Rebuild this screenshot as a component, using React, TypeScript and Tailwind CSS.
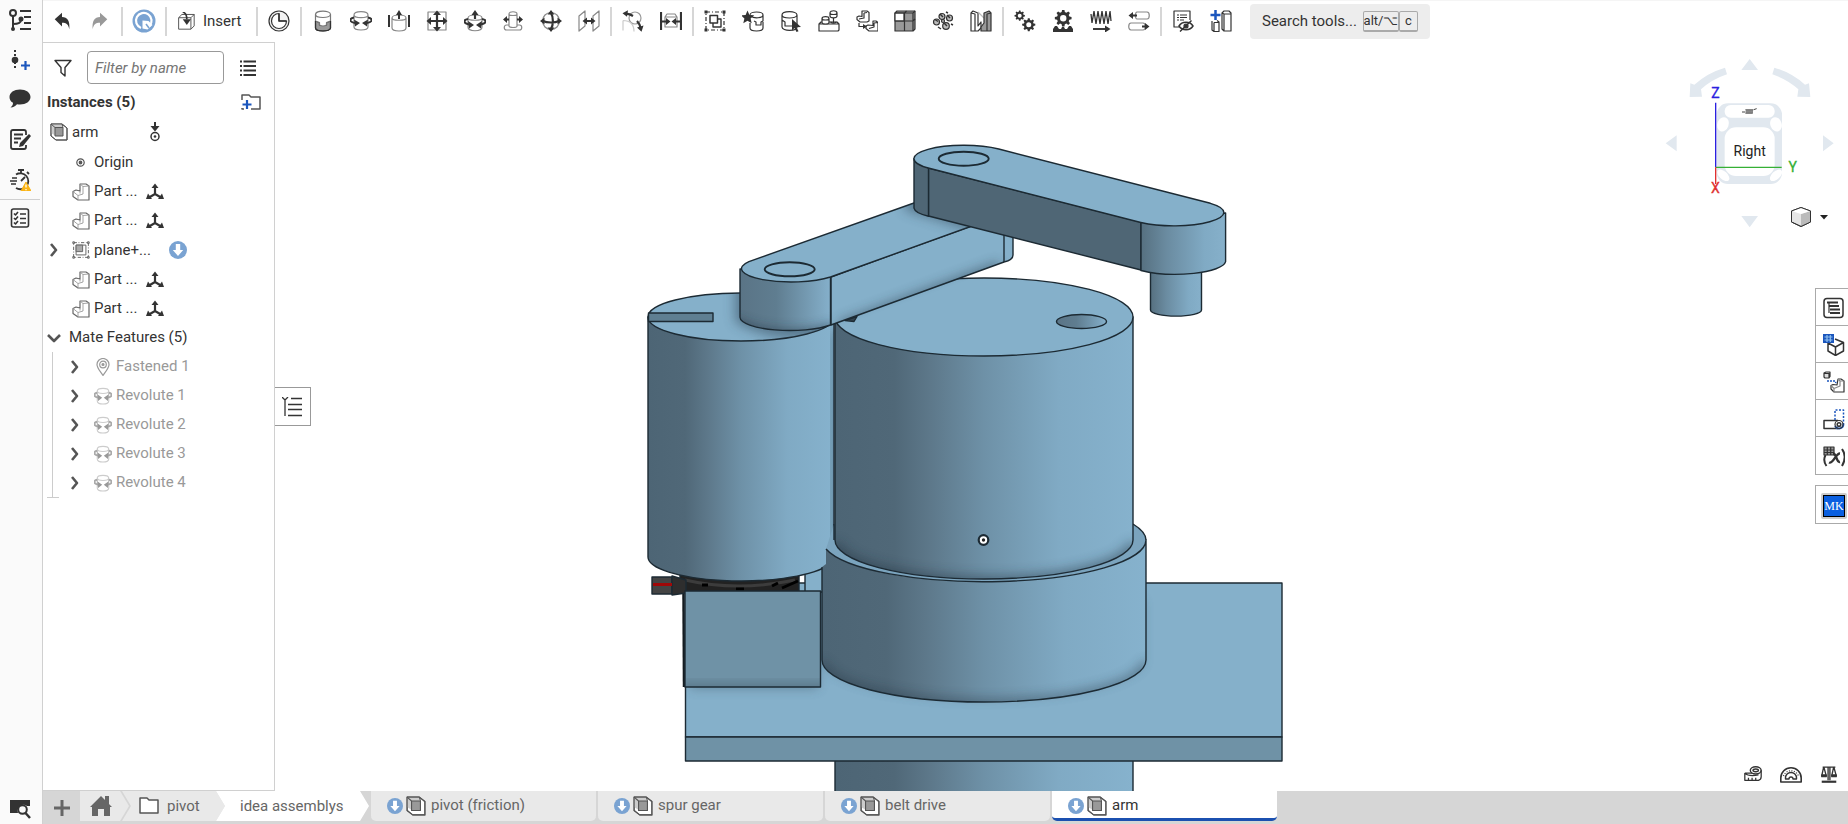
import type { ReactNode } from 'react'

const INK = '#333'

function Icon({ children, size = 22, box = 22, color = INK, w = 1.2 }: { children: ReactNode; size?: number; box?: number; color?: string; w?: number }) {
  return (
    <svg width={size} height={size} viewBox={`0 0 ${box} ${box}`} fill="none" stroke={color} strokeWidth={w} strokeLinejoin="round" className="shrink-0" aria-hidden="true">
      {children}
    </svg>
  )
}

const GEAR = 'M9.6 1h2.8l.5 2.6 1.9.8 2.2-1.5 2 2-1.5 2.2.8 1.9 2.6.5v2.8l-2.6.5-.8 1.9 1.5 2.2-2 2-2.2-1.5-1.9.8-.5 2.6H9.6l-.5-2.6-1.9-.8L5 18.900l-2-2 1.500-2.200-.8-1.900L1 12.300V9.500L3.700 9l.8-1.900L3 4.900l2-2 2.200 1.500 1.900-.8zM11 7.200a3.800 3.800 0 1 0 0 7.600 3.800 3.800 0 0 0 0-7.600z'

type Tool = { name: string; icon: ReactNode } | null

// null draws a divider
const TOOLS: Tool[] = [
  { name: 'Mate connector history', icon: (
    <>
      <circle cx="11" cy="11" r="10" fill="#f2f2f2" />
      <path d="M11 3.500a7.500 7.500 0 1 0 7.500 7.500H11z" fill="#fff" />
      <path d="M11 3.500V11h7.500" strokeWidth="1.500" />
    </>
  ) },
  null,
  { name: 'Fastened mate', icon: (
    <>
      <path d="M3.500 11v7c0 4 15 4 15 0v-7l-4 1.500V15h-7v-2.500z" fill="#999" />
      <path d="M3.500 4.500c0-4.500 15-4.500 15 0V11l-4 1.500V15q-3.500 2-7 0v-2.500l-4-1.500z" fill="#fff" stroke="#777" />
      <path d="M3.500 4.500c0 4 15 4 15 0" stroke="#777" /><path d="M3.500 11v7c0 4 15 4 15 0v-7" />
    </>
  ) },
  { name: 'Revolute mate', icon: (
    <>
      <path d="M4 5c0-4.500 14-4.500 14 0v12c0 4-14 4-14 0zM4 5c0 3.500 14 3.500 14 0" stroke="#888" />
      <path d="M4 7.500C-1 8.500-1 12 5 13M18 7.500c5 1 5 4.500-1 5.500" strokeWidth="2" />
      <path d="M4 9.500l6 3.500-5 3.500zM18 9.500L12 13l5 3.500z" fill={INK} stroke="none" />
    </>
  ) },
  { name: 'Slider mate', icon: (
    <>
      <path d="M4 8c0-4 14-4 14 0v10c0 4-14 4-14 0zM4 8c0 3 14 3 14 0" stroke="#888" />
      <path d="M1 5v12M21 5v12" strokeWidth="2" />
      <path d="M11 9V4" strokeWidth="2" /><path d="M8 5l3-5 3 5z" fill={INK} stroke="none" />
    </>
  ) },
  { name: 'Planar mate', icon: (
    <>
      <path d="M2 2h18v18H2z" stroke="#888" />
      <path d="M11 4v14M4 11h14" strokeWidth="2.200" />
      <path d="M7 5L11 .5 15 5zM7 17l4 4.500 4-4.500zM5 7L.5 11 5 15zM17 7l4.500 4-4.500 4z" fill={INK} stroke="none" />
    </>
  ) },
  { name: 'Cylindrical mate', icon: (
    <>
      <path d="M4 8c0-4 14-4 14 0v9c0 5-14 5-14 0zM4 8c0 3 14 3 14 0" stroke="#888" />
      <path d="M4 9C-1 10-1 13 5 14.500M18 9c5 1 5 4-1 5.500M11 9V4" strokeWidth="2.200" />
      <path d="M4 11l6 4-5 3.500zM18 11l-6 4 5 3.500zM7.500 5L11 0l3.500 5z" fill={INK} stroke="none" />
    </>
  ) },
  { name: 'Pin slot mate', icon: (
    <>
      <path d="M7 4c0-3 8-3 8 0v12c0 2-8 2-8 0zM7 4c0 2 8 2 8 0M7 15H4.500c-3 0-3 5 0 5h13c3 0 3-5 0-5H15" stroke="#888" />
      <path d="M7 9.500H4M15 9.500h3" strokeWidth="2" />
      <path d="M5 6L1 9.500 5 13zM17 6l4 3.500-4 3.500z" fill={INK} stroke="none" />
    </>
  ) },
  { name: 'Ball mate', icon: (
    <>
      <circle cx="11" cy="11" r="8.500" stroke="#888" />
      <path d="M11 3c2.500 4 2.500 12 0 16M3 11c4 2 12 2 16 0" strokeWidth="2.200" />
      <path d="M7.500 4.500L11 0l3.500 4.500zM7.500 17.500L11 22l3.500-4.500zM4.500 7.500L0 11l4.500 3.500zM17.500 7.500L22 11l-4.500 3.500z" fill={INK} stroke="none" />
    </>
  ) },
  { name: 'Parallel mate', icon: (
    <>
      <path d="M1 6l6-5v15l-6 5zM15 6l6-5v15l-6 5z" stroke="#888" />
      <path d="M7 11h8" strokeWidth="2" />
      <path d="M9 7.500L4.500 11 9 14.500zM13 7.500l4.500 3.500-4.500 3.500z" fill={INK} stroke="none" />
    </>
  ) },
  null,
  { name: 'Tangent mate', icon: (
    <>
      <circle cx="13" cy="8" r="6" stroke="#999" />
      <path d="M1 10.500c7 0 11 4 11 11M1 10.500v10" stroke="#ccc" />
      <path d="M11 6C8.500 4.500 6.500 4 4 3.700M15 11c2 2 3 4.500 3.500 7" strokeWidth="2.200" />
      <path d="M6 .3L.5 3.200l4.500 3.600zM15 17.500l4.500 4.300 2-6.300z" fill={INK} stroke="none" />
    </>
  ) },
  { name: 'Width mate', icon: (
    <>
      <path d="M1 2v18M21 2v18" strokeWidth="2.200" />
      <path d="M5 7l2-3h8l2 3v10H5zM5 7h12" stroke="#888" />
      <path d="M2 11.500h5M20 11.500h-5" strokeWidth="2" />
      <path d="M6 8l4.500 3.500L6 15zM16 8l-4.500 3.500L16 15z" fill={INK} stroke="none" />
    </>
  ) },
  null,
  { name: 'Group', icon: (
    <>
      <path d="M2 2h18v18H2z" strokeDasharray="4 2 1 2" />
      <path d="M.5.5h3v3h-3zM18.500.5h3v3h-3zM.5 18.500h3v3h-3zM18.500 18.500h3v3h-3z" fill={INK} stroke="none" />
      <path d="M9 9h8v8H9z" strokeWidth="1.400" /><path d="M6 5.500h7.500V13H6z" fill="#fff" strokeWidth="1.500" />
    </>
  ) },
  { name: 'Favorite part', icon: (
    <>
      <path d="M8 5c0-4 13-4 13 0v6l-2 1v3h-5v-3l-2-1M8 13v5c0 4 13 4 13 0v-6M9 6c3 3 12 2 12-1" />
      <path d="M5.500.5l1.900 4.400 4.800.4-3.600 3.200 1.100 4.700-4.200-2.500-4.200 2.500 1.100-4.700-3.400-3.200 4.600-.4z" fill={INK} stroke="none" />
    </>
  ) },
  { name: 'Select part', icon: (
    <>
      <path d="M2 5c0-4.500 15-4.500 15 0v12c0 4.500-15 4.500-15 0zM2 5c0 4 15 4 15 0M2 10l3 2v4h7" />
      <path d="M12 9l9 8-4.500.3 2 4-2 .7-2-4-2.500 2.500z" fill={INK} stroke="none" />
    </>
  ) },
  { name: 'Snap parts', icon: (
    <>
      <path d="M1 14l2-2h16l2 2v6l-1 1H1zM1 14h20" />
      <path d="M4 8.500c0-2.500 7-2.500 7 0v4c0 2-7 2-7 0zM12 3c0-3 7-3 7 0v3c0 2.500-7 2.500-7 0zM4 8.500c0 2 7 2 7 0M12 3c0 2 7 2 7 0" fill="#fff" />
      <path d="M15.500 8v5M12.500 12c2 1.500 4 1.500 6 0" />
    </>
  ) },
  { name: 'Move part', icon: (
    <>
      <path d="M6 1h5l2 1.500V11l-2 1H4L1 9.500V7l2-1 3 .5zM8 3l3-.5M8 3v5l-5 1" />
      <path d="M17 11h3l2 1.500V21h-9l-3-2.500V16l2-1 5 .5zM18 13v4l-5 1.500M18 13l4-.5" />
      <path d="M3 13v3.500h5" /><path d="M7 14l4 2.500L7 19z" fill={INK} stroke="none" />
    </>
  ) },
  { name: 'Linear pattern', icon: (
    <>
      <path d="M1 3l2-2h18v18l-2 2H1z" fill="#999" />
      <path d="M1 3h9v8H1z" fill="#fff" />
      <path d="M1 11h18l2-2M10.500 3v18M10.500 3l2-2M19 3v18M1 3h18l2-2" />
    </>
  ) },
  { name: 'Circular pattern', icon: (
    <>
      <g fill="#bbb">
        <circle cx="4.500" cy="12" r="3" /><circle cx="10" cy="6.500" r="3" /><circle cx="17.500" cy="8" r="3" /><circle cx="14" cy="16" r="3.300" /><circle cx="11" cy="11" r="1.500" />
      </g>
      <path d="M3 9.500l3 2M8 4l3 3M15 5l3 3M12 13l3 3M6 17l3 2M19 14l2 1M14 2l2 1" strokeWidth="1.500" />
    </>
  ) },
  { name: 'Mirror parts', icon: (
    <>
      <path d="M1 3l2-2 5 2v13l3-4v6l-3 3H1zM1 3l4 1v17" fill="#fff" />
      <path d="M8 2l6 6" stroke="#bbb" />
      <path d="M21 3l-2-2-5 2v10l-3 4v4h10zM21 3l-4 1v17" fill="#999" />
    </>
  ) },
  null,
  { name: 'Gear relation', icon: (
    <g fill={INK} stroke="none" fillRule="evenodd">
      <path d={GEAR} transform="scale(.52)" /><path d={GEAR} transform="translate(7.500 7.500) scale(.66)" />
    </g>
  ) },
  { name: 'Rack and pinion relation', icon: (
    <g fill={INK} stroke="none" fillRule="evenodd">
      <path d={GEAR} transform="translate(2 -1) scale(.84)" />
      <path d="M1 22v-3l2-3h2l2 3h2l1-2h2l1 2h2l2-3h2l2 3v3z" />
    </g>
  ) },
  { name: 'Screw relation', icon: (
    <>
      <path d="M1 4l1 9M4 1l2 13M8 1l2 13M12 1l2 13M16 1l2 13M20 1l1 10M2 13l2-12M6 14L8 1M10 14l2-13M14 14l2-13M18 14l2-13" strokeWidth="1.300" />
      <path d="M3 19h13" strokeWidth="1.900" /><path d="M15 15.500l5.500 3.500-5.500 3.500z" fill={INK} stroke="none" />
    </>
  ) },
  { name: 'Linear relation', icon: (
    <>
      <path d="M9 2h10c3 0 3 7 0 7H9c-2 0-2-7 0-7zM3 13h12c3 0 3 7 0 7H3c-3 0-3-7 0-7z" stroke="#888" />
      <path d="M9 5.500H4M14 16.500h5" strokeWidth="2" /><path d="M5 2L.5 5.500 5 9zM17 13l4.500 3.500L17 20z" fill={INK} stroke="none" />
    </>
  ) },
  null,
  { name: 'Hide named views', icon: (
    <>
      <path d="M7 17H2V1h16v9" /><path d="M5 5h10M5 7.500h10M5 10h7" strokeDasharray="2 1 20 0" />
      <path d="M7 16c3-5 11-5 14 0-3 5-11 5-14 0zM8 21.500L19.500 10.500" strokeWidth="1.500" /><circle cx="14" cy="16" r="2" fill={INK} />
    </>
  ) },
  { name: 'Add configured part', icon: (
    <>
      <path d="M2 11v9l2 1.500h5V12l-2-1.500M12 3l2-2h5l2 2v18h-7l-2-2zM14 4h7M14 4v17M12 3l2 1M4 12.500h5M4 12.500V21" />
      <path d="M5.500 0v10M.5 5h10" stroke="#1b56bd" strokeWidth="2.500" />
    </>
  ) },
]

const Divider = () => <span className="mx-[2px] h-[29px] w-[2px] shrink-0 bg-[#d6d6d6]" />

function Toolbar() {
  return (
    <header className="flex h-[42px] items-center border-t border-[#f5f5f5] bg-white pb-px">
      <button aria-label="Undo" className="flex w-[38px] justify-center">
        <Icon size={20}><path d="M3 9l8-7v4.500c6 0 9 4.500 8 13.500-1-5-3-7-8-7v4z" fill={INK} stroke="none" /></Icon>
      </button>
      <button aria-label="Redo" className="flex w-[38px] justify-center">
        <Icon size={20}><path d="M19 9l-8-7v4.500c-6 0-9 4.500-8 13.500 1-5 3-7 8-7v4z" fill="#999" stroke="none" /></Icon>
      </button>
      <Divider />
      <button aria-label="Update" className="flex w-[38px] justify-center">
        <Icon size={24} box={24}>
          <circle cx="12" cy="12" r="11.500" fill="#7aa3d2" stroke="none" />
          <path d="M9 19a7.800 7.800 0 1 1 8.500-2" stroke="#fff" strokeWidth="2.200" />
          <path d="M10.500 11.500l6 .5 4 4-5 4.500-5-1z" fill="#fff" stroke="none" />
          <path d="M14 15l3 4" stroke="#7aa3d2" strokeWidth="1.500" />
        </Icon>
      </button>
      <Divider />
      <button className="flex w-[85px] items-center gap-2 pl-2 text-[15px]">
        <Icon size={18}>
          <path d="M2 7l4-4h15v14l-4 4H2zM2 7h15v14M17 7l4-4" stroke="#555" />
          <path d="M7 0c4 1 5 4 5 9" strokeWidth="2" /><path d="M7 9h10l-5 7z" fill={INK} stroke="none" />
        </Icon>
        Insert
      </button>
      <Divider />
      {TOOLS.map((t, i) => t
        ? <button key={i} aria-label={t.name} className="flex w-[38px] shrink-0 justify-center"><Icon>{t.icon}</Icon></button>
        : <Divider key={i} />)}
      <button className="ml-[10px] flex h-[35px] w-[180px] shrink-0 items-center rounded-[4px] bg-[#ededed] pl-3 text-[15px]">
        <span className="w-[101px] text-left">Search tools...</span>
        <kbd className="flex h-[21px] w-[36px] items-center justify-center rounded-[2px] border border-b-2 border-[#aaa] font-[Roboto,sans-serif] text-[13px] whitespace-nowrap">alt/⌥</kbd>
        <kbd className="flex h-[21px] w-[19px] items-center justify-center rounded-[2px] border border-b-2 border-[#aaa] font-[Roboto,sans-serif] text-[13px]">c</kbd>
      </button>
    </header>
  )
}

function Rail() {
  const btn = 'flex h-[40px] w-full items-center justify-center'
  return (
    <nav className="flex w-[43px] shrink-0 flex-col border-r border-[#d0d0d0] bg-[#fafafa] pr-[2px]">
      <button aria-label="Instances" className={btn}>
        <Icon w={2}><circle cx="4" cy="4" r="3" /><path d="M4 7v14M4 15c5 0 8-1 8-4M11 2h11M15 8h7M15 14h7M11 20h11" /><circle cx="4" cy="20" r="1" /><circle cx="12" cy="10" r="1.500" fill={INK} /></Icon>
      </button>
      <button aria-label="Add version" className={btn}>
        <Icon><path d="M6 1v20" strokeWidth="2" strokeDasharray="2 2" /><circle cx="6" cy="11" r="3.300" fill={INK} stroke="none" /><path d="M16.500 12v9M12 16.500h9" stroke="#1b56bd" strokeWidth="2.200" /></Icon>
      </button>
      <button aria-label="Comments" className={btn}>
        <Icon><path d="M11 .5c6 0 10.500 3 10.500 7.500s-4.500 7.500-10.500 7.500c-1 0-2 0-3-.3-1.500 1.800-3.500 3-6.500 3.300 2-1.500 2.500-3 2.500-4.700C1.500 12.500.5 10.500.5 8 .5 3.500 5 .5 11 .5z" fill={INK} stroke="none" /></Icon>
      </button>
      <button aria-label="Notes" className={btn}>
        <Icon w={1.8}><path d="M17 6V3q0-2-2-2H4Q2 1 2 3v15q0 2 2 2h11q2 0 2-2v-2M5 5.500h9M5 9.500h7M5 13.500h4" /><path d="M20 5l2 2-8 10-4 1 1-4z" fill={INK} stroke="none" /></Icon>
      </button>
      <button aria-label="Performance" className={`${btn} border-b border-[#d0d0d0]`}>
        <Icon w={1.800}>
          <path d="M9 1h6M12 1v3M18 3l2 2M7 5.500A8 8 0 1 1 7 19M12 12l4-4" /><path d="M3 9h5M1 12h7M2 15h5" strokeWidth="1.300" />
          <path d="M17 13l5 9H12z" fill="#fbb414" stroke="#fbb414" strokeWidth="1" /><path d="M17 15.500v3M17 20v1.300" stroke="#fff" strokeWidth="1.300" />
        </Icon>
      </button>
      <button aria-label="Checklist" className="-mt-[2px] flex h-[40px] w-full items-center justify-center">
        <Icon size={20} box={20} w={1.6}><rect x="1.500" y="1" width="17" height="18" rx="2" /><path d="M4 5.500l1.500 1.500L8 4M4 10l1.500 1.500L8 8.500M4 14.500L5.500 16 8 13M10 6h6M10 10.500h6M10 15h6" /></Icon>
      </button>
      <button aria-label="Search document" className="mt-auto flex h-[32px] w-full items-center justify-center">
        <Icon><path d="M1 3h20v6h-3a6 6 0 0 0-9 7H1z" fill={INK} stroke="none" /><circle cx="13.500" cy="12.500" r="4.300" strokeWidth="2" fill="#fafafa" /><path d="M16.500 16l4.500 5" strokeWidth="2.500" /></Icon>
      </button>
    </nav>
  )
}

const Chevron = ({ open = false }: { open?: boolean }) => (
  <Icon size={14} box={14} color="#555" w={2.6}><path d={open ? 'M1 4l6 6 6-6' : 'M4 1l5 6-5 6'} /></Icon>
)

const AssemblyIcon = ({ size = 18 }: { size?: number }) => (
  <Icon size={size} box={18} color="#555" w={1}>
    <path d="M1 1h11l5 4v12H6l-5-4z" fill="#fff" /><path d="M1 1h11v10l-6 2-5-3z" fill="#ccc" stroke="none" />
    <path d="M5 4.500h8v8.500H5z" fill="#999" /><path d="M1 1l4 3.500M12 1l1 3.500" /><path d="M1 1h11l5 4v12H6l-5-4z" />
  </Icon>
)

const PartIcon = () => (
  <Icon size={18} box={18} color="#666">
    <path d="M8 1h6l3 2v14H6l-5-3.500V8.500L4 7l4 1z" />
    <path d="M8 1l3 2.500V11l-5 1.500V17M11 3.500l6-.5M1 8.500l5 4M8 8v2.500" strokeWidth=".9" stroke="#999" />
  </Icon>
)

const TriadIcon = () => (
  <Icon size={18} box={18}><path d="M9 3v8M9 11l-6 3.500M9 11l6 3.500" strokeWidth="2.200" /><path d="M5.500 5L9 .5 12.500 5zM0 16l2-5.500L6 16zM18 16l-2-5.500L12 16z" fill={INK} stroke="none" /></Icon>
)

const DownIcon = ({ size = 18 }: { size?: number }) => (
  <Icon size={size} box={18}><circle cx="9" cy="9" r="9" fill="#7aa3d2" stroke="none" /><path d="M6.800 3h4.400v6h3L9 15 3.800 9h3z" fill="#fff" stroke="none" /></Icon>
)

const RevoluteIcon = () => (
  <Icon size={18} box={22} color="#aaa" w={1.4}>
    <path d="M4 5c0-4.500 14-4.500 14 0v12c0 5-14 5-14 0zM4 5c0 4 14 4 14 0" stroke="#ccc" />
    <path d="M4 7C-1 8-1 12 5 13M18 7c5 1 5 5-1 6" strokeWidth="2.400" /><path d="M4 9l6 4-5 4zM18 9l-6 4 5 4z" fill="#999" stroke="none" />
  </Icon>
)

const PinIcon = () => (
  <Icon size={18} box={18} color="#999"><path d="M9 17.500C6 13 3 10 3 6.500a6 6 0 0 1 12 0c0 3.500-3 6.500-6 11z" /><circle cx="9" cy="6.500" r="3.300" /><circle cx="9" cy="6.500" r="1" fill="#999" /></Icon>
)

const PartRow = () => (
  <li className="flex h-[29px] items-center pl-[29px]">
    <PartIcon /><span className="ml-1 w-[52px]">Part ...</span><TriadIcon />
  </li>
)

const MATES = ['Fastened 1', 'Revolute 1', 'Revolute 2', 'Revolute 3', 'Revolute 4']

function InstancePanel() {
  return (
    <aside className="flex w-[232px] shrink-0 flex-col border-t border-r border-b border-[#d0d0d0] bg-white text-[15px]">
      <div className="flex items-center pt-2 pb-[3px]">
        <button aria-label="Filter" className="flex w-[44px] justify-center pr-1">
          <Icon size={18} box={18} w={1.4}><path d="M1 1.500h16l-6 7V17l-4-3.500v-5z" /></Icon>
        </button>
        <input aria-label="Filter by name" placeholder="Filter by name" className="h-[33px] w-[137px] rounded-[4px] border border-[#999] px-[7px] italic outline-none placeholder:text-[#757575]" />
        <button aria-label="List options" className="ml-4">
          <Icon size={16} box={16} w={2.2}><path d="M0 1.500h2M0 6h2M0 10.500h2M0 15h2M3.500 1.500H16M3.500 6H16M3.500 10.500H16M3.500 15H16" /></Icon>
        </button>
      </div>
      <div className="flex h-[30px] items-center justify-between pr-[13px] pl-1">
        <h2 className="font-bold">Instances (5)</h2>
        <button aria-label="New folder">
          <Icon size={20} box={20} color="#555"><path d="M1 8V3h7l2 2h9v12H10M1 16v1h2" strokeWidth="1.500" /><path d="M6 8v9M1.500 12.500h9" stroke="#1b56bd" strokeWidth="2.200" /></Icon>
        </button>
      </div>
      <ul>
        <li className="flex h-[30px] items-center pl-[7px]">
          <AssemblyIcon /><span className="ml-1 w-[73px]">arm</span>
          <Icon size={20} box={20}><path d="M10 0v5" strokeWidth="2" /><path d="M5.500 4h9L10 9.500z" fill={INK} stroke="none" /><circle cx="10" cy="14.500" r="4" strokeWidth="1.500" /><circle cx="10" cy="14.500" r="1.300" fill={INK} stroke="none" /></Icon>
        </li>
        <li className="flex h-[30px] items-center pl-[33px]">
          <Icon size={9} box={9} color="#555"><circle cx="4.500" cy="4.500" r="3.700" /><circle cx="4.500" cy="4.500" r="1.300" fill="#555" /></Icon>
          <span className="ml-[9px]">Origin</span>
        </li>
        <PartRow />
        <PartRow />
        <li className="flex h-[30px] items-center pl-1">
          <button aria-label="Expand plane" className="w-[25px]"><Chevron /></button>
          <Icon size={18} color="#666">
            <path d="M2 2h18v18H2z" strokeDasharray="4 2 1 2" /><path d="M1 1h2v2H1zM19 1h2v2h-2zM1 19h2v2H1zM19 19h2v2h-2z" />
            <path d="M5 5h12v12H5z" /><path d="M5 5h8v8H5z" fill="#aaa" />
          </Icon>
          <span className="ml-1 w-[75px]">plane+...</span>
          <DownIcon />
        </li>
        <PartRow />
        <PartRow />
      </ul>
      <button className="flex h-[29px] items-center gap-2 pl-1"><Chevron open />Mate Features (5)</button>
      <ul className="ml-[9px] border-l border-[#ccc] text-[#999]">
        {MATES.map(m => (
          <li key={m} className="flex h-[29px] items-center pl-[15px]">
            <button aria-label={`Expand ${m}`} className="w-[26px]"><Chevron /></button>
            {m.startsWith('Fastened') ? <PinIcon /> : <RevoluteIcon />}
            <span className="ml-1">{m}</span>
          </li>
        ))}
      </ul>
      <span className="ml-1 h-px w-3 bg-[#ccc]" />
    </aside>
  )
}

const LEFT_BODY = 'M648 317V557A93 24 0 0 0 826 566.700L834 561V317z'
const MAIN_BODY = 'M835 317V540A149 39 0 0 0 1133 540V317z'
const FLANGE = 'M822 567l4-3v-15A162 42 0 0 0 1146 540V660A162 42 0 0 1 822 660z'
const ARM_END = 'M740 269V317.300A50 13.400 0 0 0 830.500 325V277z'

function Model() {
  return (
    <svg viewBox="275 42 1573 749" preserveAspectRatio="xMidYMid slice" className="absolute inset-0 h-full w-full" stroke="#1c2a33" strokeWidth="1.400" strokeLinejoin="round" role="img" aria-label="Arm assembly">
      <defs>
        <linearGradient id="cyl">
          <stop offset="0" stopColor="#4d6575" /><stop offset=".2" stopColor="#506878" /><stop offset=".32" stopColor="#5d788a" />
          <stop offset=".5" stopColor="#6e91a7" /><stop offset=".75" stopColor="#80aac4" /><stop offset="1" stopColor="#86b2cd" />
        </linearGradient>
        <linearGradient id="round">
          <stop offset="0" stopColor="#5a7486" /><stop offset=".4" stopColor="#5f7d90" /><stop offset="1" stopColor="#85b0cb" />
        </linearGradient>
        <linearGradient id="tip">
          <stop offset="0" stopColor="#567080" /><stop offset=".3" stopColor="#6a8ba0" /><stop offset=".75" stopColor="#80aac4" /><stop offset="1" stopColor="#86b0ca" />
        </linearGradient>
        <filter id="soft" x="-20%" y="-60%" width="140%" height="220%"><feGaussianBlur stdDeviation="6" /></filter>
        <clipPath id="plateTop"><path d="M686 583h596v154H686z" /></clipPath>
        <clipPath id="housing"><path d="M686 592h134v95H686z" /></clipPath>
        <clipPath id="leftTop"><ellipse cx="741" cy="317" rx="93" ry="24" /></clipPath>
        <clipPath id="bigTop"><ellipse cx="984" cy="317" rx="149" ry="39" /></clipPath>
        <clipPath id="leftBody"><path d={LEFT_BODY} /></clipPath>
        <clipPath id="mainBody"><path d={MAIN_BODY} /></clipPath>
        <clipPath id="flangeBody"><path d={FLANGE} /></clipPath>
        <clipPath id="armEnd"><path d={ARM_END} /></clipPath>
        <clipPath id="armSide"><path d="M831 277l140-51 42 5v24q0 5-9 7L831 325z" /></clipPath>
        <clipPath id="armTop"><path d="M830.500 277A50 13.400 0 0 1 748.900 261.600L914 203l58 14v9z" /></clipPath>
      </defs>

      {/* base plate and column */}
      <path d="M835 755h298v50H835z" fill="url(#cyl)" />
      <path d="M685.500 583H1282v154H685.500z" fill="#85b0ca" />
      <path d="M685.500 737H1282v24H685.500z" fill="#6f92a6" />
      <g clipPath="url(#plateTop)" stroke="none" fill="#2d4353" opacity=".4" filter="url(#soft)">
        <path d="M826 600v64A160 40 0 0 0 1142 664V600z" /><path d="M690 650h128v38H690z" />
      </g>

      {/* motor and its housing */}
      <path d="M805 565h18v27h-18z" fill="#85b0ca" />
      <path d="M680 572h119v20H680z" fill="#222" />
      <path d="M685 580q52 12 110 0" fill="none" stroke="#3c3c3c" strokeWidth="3" />
      <path d="M702 585h6M736 589h8M772 586l6-3M782 588l16-7" stroke="#000" strokeWidth="3" />
      <path d="M652 577h20v17h-20z" fill="#444" /><path d="M672 576l14 4v13l-14 2z" fill="#2e2e2e" />
      <path d="M653 584.500h19" stroke="#a00808" strokeWidth="3" />
      <path d="M683.500 594l.5 93" strokeWidth="2.500" stroke="#151c21" />
      <path d="M685 591h135.500v96H685z" fill="#6f92a6" />
      <g clipPath="url(#housing)"><path d="M676 689h154" stroke="#22333f" strokeWidth="12" opacity=".6" filter="url(#soft)" /><path d="M676 684h154v10H676z" stroke="none" fill="#22333f" opacity=".35" filter="url(#soft)" /></g>

      {/* left cylinder */}
      <path d={LEFT_BODY} fill="url(#cyl)" />
      <g clipPath="url(#leftBody)"><path d="M836 330v240" stroke="#22333f" strokeWidth="8" opacity=".01" /><path d="M832 330h6v230h-6z" fill="#22333f" stroke="none" opacity=".5" filter="url(#soft)" /></g>
      <ellipse cx="741" cy="317" rx="93" ry="24" fill="#85b0ca" />
      <path d="M648.500 313H713v8.500h-64.500z" fill="#5f7f92" />
      <g clipPath="url(#leftTop)"><path d="M735 280h110v52q-60 18-110-10z" fill="#2d4353" opacity=".5" stroke="none" filter="url(#soft)" /></g>

      {/* flange and main cylinder */}
      <path d="M826 549l8-25h299q13 8 13 16A162 42 0 0 1 826 549z" fill="#7ba4be" stroke="none" />
      <path d="M1133 524q13 8 13 16M834 524v16" fill="none" />
      <path d={FLANGE} fill="url(#cyl)" stroke="none" />
      <path d="M826 549A162 42 0 0 0 1146 540V660A162 42 0 0 1 822 660V567" fill="none" />
      <g clipPath="url(#flangeBody)"><path d="M822 662A162 42 0 0 0 1146 662" fill="none" stroke="#22333f" strokeWidth="10" opacity=".45" filter="url(#soft)" /></g>
      <path d={MAIN_BODY} fill="url(#cyl)" />
      <g clipPath="url(#mainBody)"><path d="M835 543A149 39 0 0 0 1133 543" fill="none" stroke="#22333f" strokeWidth="12" opacity=".5" filter="url(#soft)" /></g>
      <ellipse cx="984" cy="317" rx="149" ry="39" fill="#85b0ca" />
      <g clipPath="url(#bigTop)"><path d="M820 320l170-62-20-16-160 60z" fill="#2d4353" opacity=".6" stroke="none" filter="url(#soft)" /></g>
      <path d="M845 320.500l12-4-3 5z" fill="#33434e" />
      <ellipse cx="1081.500" cy="321.500" rx="25" ry="7" fill="url(#round)" />

      {/* lower arm */}
      <path d="M831 277l140-51 42 5v24q0 5-9 7L831 325z" fill="#85b0ca" />
      <g clipPath="url(#armSide)"><path d="M840 328l160-60" stroke="#22333f" strokeWidth="14" opacity=".45" filter="url(#soft)" /></g>
      <path d="M1004 230v32" />
      <path d={ARM_END} fill="url(#round)" />
      <g clipPath="url(#armEnd)"><path d="M740 320A50 13.400 0 0 0 835 328" fill="none" stroke="#22333f" strokeWidth="12" opacity=".6" filter="url(#soft)" /></g>
      <path d="M830.500 277A50 13.400 0 0 1 748.900 261.600L914 203l58 14v9z" fill="#85b0ca" />
      <g clipPath="url(#armTop)"><path d="M905 210l80 25v-20L905 195z" fill="#2d4353" opacity=".5" stroke="none" filter="url(#soft)" /></g>
      <ellipse cx="789.700" cy="269.300" rx="25" ry="7" fill="none" strokeWidth="1.900" />

      {/* upper arm */}
      <path d="M1150.500 265v45A25 6 0 0 0 1201.500 310v-45z" fill="url(#tip)" />
      <path d="M928.500 168v48l212.500 54v-48z" fill="#4f6675" />
      <path d="M914 158.700v49.500q1 5 14.500 8v-48z" fill="#4f6675" />
      <path d="M1141 222.500V270.500A50 13.400 0 0 0 1225.600 261.700V213z" fill="url(#tip)" />
      <path d="M929.200 168.300A50 13.400 0 0 1 998.800 149L1210.400 203.300A50 13.400 0 0 1 1140.800 222.500z" fill="#85b0ca" />
      <ellipse cx="963.700" cy="158.700" rx="25" ry="7" fill="none" strokeWidth="1.900" />

      <circle cx="983.500" cy="540" r="4.800" fill="#fff" strokeWidth="2.200" /><circle cx="983.500" cy="540" r="1.700" fill="#222" stroke="none" />
    </svg>
  )
}

function ViewCube() {
  return (
    <div className="absolute top-0 right-0 flex w-[208px] flex-col">
      <svg viewBox="0 6 624 468" className="-mb-[34px] h-[190px] w-[208px]" preserveAspectRatio="xMidYMin meet" overflow="visible" role="img" aria-label="View cube">
        <g fill="#e1e8ef">
          <path d="M329 57l25 33h-50zM329 562l25-34h-50zM77 310l33-24v48zM581 310l-32-24v48z" />
          <path d="M255 83l6 20q-45 15-78 45l3 22-37 1 2-41 12 4q40-36 92-51zM403 83l-6 20q45 15 78 45l-3 22 39 1-4-41-12 4q-40-36-92-51z" />
          <rect x="230" y="190" width="196" height="242" rx="34" />
        </g>
        <g fill="#fff">
          <rect x="254" y="195" width="150" height="38" rx="18" /><rect x="254" y="262" width="150" height="146" rx="34" />
          <ellipse cx="249" cy="253" rx="17" ry="22" transform="rotate(20 249 253)" /><ellipse cx="408" cy="253" rx="17" ry="22" transform="rotate(-20 408 253)" />
          <ellipse cx="250" cy="406" rx="12" ry="22" transform="rotate(-48 250 406)" /><ellipse cx="408" cy="406" rx="12" ry="22" transform="rotate(48 408 406)" />
        </g>
        <path d="M306 216h10M341 209l9-3" stroke="#444" strokeWidth="3" /><path d="M317 209h22v11h-22z" fill="#888" /><path d="M316 209h24M316 220h22" stroke="#444" strokeWidth="2" />
        <path d="M227 382V188" stroke="#2a20e0" strokeWidth="4" /><path d="M227 382h198" stroke="#35b035" strokeWidth="4" /><path d="M227 382v50" stroke="#e03030" strokeWidth="4" />
        <g fontSize="42" textAnchor="middle" strokeWidth="1">
          <text x="329" y="347" fill="#222">Right</text>
          <text x="226" y="174" fill="#2a20e0" stroke="#2a20e0">Z</text>
          <text x="458" y="397" fill="#35b035" stroke="#35b035">Y</text>
          <text x="226" y="458" fill="#e03030" stroke="#e03030">X</text>
        </g>
      </svg>
      <button aria-label="View options" className="mt-[9px] mr-5 flex items-center gap-[9px] self-end">
        <svg width="20" height="20" viewBox="0 0 20 20" stroke="#333" strokeWidth="1" strokeLinejoin="round">
          <path d="M.5 4L10 .5 19.500 4v11L10 19.500.5 15z" fill="#e5e5e5" /><path d="M10 7l9.500-3v11L10 19.500z" fill="#bbb" stroke="none" /><path d="M.5 4L10 7l9.500-3L10 .5z" fill="#fff" stroke="none" /><path d="M.5 4L10 .5 19.500 4v11L10 19.500.5 15z" fill="none" />
        </svg>
        <svg width="8" height="5" viewBox="0 0 8 5"><path d="M0 0h8L4 4.500z" fill="#222" /></svg>
      </button>
    </div>
  )
}

const SIDE_TOOLS = [
  { name: 'Bill of materials', icon: <><rect x="1" y="1.500" width="19" height="19" rx="3" strokeWidth="1.500" /><path d="M4 5.500h11M6 9h10M7 12.500h10M7 16h10" strokeWidth="2.200" /><path d="M6 5v11" /></> },
  { name: 'Configurations', icon: <><path d="M12 5l8.500 3.500V17L12.500 21.500 5 17V9M5 9l7.500 4 8-4.500M12.500 13v8.500" strokeWidth="1.500" /><path d="M0 0h11v9H0z" fill="#1b56bd" stroke="none" /><path d="M1.500 3h8M1.500 6h8M4 1v7M7.300 1v7" stroke="#8fc0ee" /></> },
  { name: 'Display states', icon: <><path d="M1 2l2-1h4v4.500L6 7H2L1 6zM1 2.500h5V7" fill="#ddd" /><path d="M15 8h3l3 2v11H11l-3-3v-3.500l2-1 4 .5z" /><path d="M15 8l2 2v5l-6 2.500V21M17 10h4M8 14.500l3 3" stroke="#888" /><path d="M4 10h8l1 2" stroke="#1b56bd" strokeWidth="1.500" strokeDasharray="2 1" /></> },
  { name: 'Named positions', icon: <><path d="M15 12.500H1v8h14" strokeWidth="1.500" /><path d="M12 12V2h8.500v14" stroke="#1b56bd" strokeDasharray="2 1.500" strokeWidth="1.500" /><path d="M20.500 16a4.500 4.500 0 0 1-8.500 2" stroke="#1b56bd" strokeWidth="1.800" /><circle cx="16" cy="16.500" r="4" /><circle cx="16" cy="16.500" r="1.800" strokeWidth="1.500" /></> },
  { name: 'Variables', icon: <><path d="M1 1h10v8H1zM1 4h10M1 6.500h10M4.300 1v8M7.700 1v8" fill="#999" /><path d="M2.500 9c-2 4-2 7 1 11M19 3c3.500 5 3.500 11 0 17" strokeWidth="2" /><path d="M6 16.500c4 2 7-9.500 11-9M10 7.500c4 0 3 9.500 7 8.500" strokeWidth="2.400" /></> },
]

function Canvas() {
  const side = 'flex h-[37px] items-center pt-[2px] pl-[7px]'
  return (
    <main className="relative min-w-0 flex-1 overflow-hidden bg-white">
      <Model />
      <button aria-label="Show feature list" className="absolute top-[345px] left-0 flex h-[39px] w-[36px] items-center justify-center border border-l-0 border-[#999] bg-white pr-[2px]">
        <Icon size={20} box={20} w={1.3}><path d="M0 0l3 3 3-3M3 3v16M9 1.500h11M6 7.500h14M6 12.500h14M6 18.500h14" /></Icon>
      </button>
      <ViewCube />
      <div className="absolute top-[246px] right-0 w-[33px]">
        <div className="divide-y divide-[#aaa] border border-r-0 border-[#aaa] bg-white">
          {SIDE_TOOLS.map(t => <button key={t.name} aria-label={t.name} className={`${side} w-full`}><Icon>{t.icon}</Icon></button>)}
        </div>
        <div className="mt-[10px] border border-r-0 border-[#aaa] bg-white">
          <button className={`${side} w-full`}>
            <span className="-ml-[2px] flex h-[26px] w-[26px] shrink-0 items-center justify-center rounded-[2px] bg-[#ccc]">
              <span className="flex h-[22px] w-[22px] items-center justify-center border border-black bg-[#0a5fe0] font-[Liberation_Serif,serif] text-[12px] text-white">MK</span>
            </span>
          </button>
        </div>
      </div>
      <div className="absolute right-[9px] bottom-[6px] flex gap-[17px]">
        <button aria-label="Measure"><Icon size={20}><path d="M2 10v8h15q3-1 3-4V7M2 10h8M6 18v-3M10 18v-3M14 18v-3M2 10q4 4 15 2" strokeWidth="1.400" /><ellipse cx="14" cy="7" rx="6" ry="4" strokeWidth="1.500" /><ellipse cx="14" cy="7" rx="3" ry="1.500" strokeWidth="1.500" /></Icon></button>
        <button aria-label="Protractor"><Icon><path d="M.8 19v-4a10.200 10.200 0 0 1 20.400 0v4z" strokeWidth="1.600" /><path d="M5.500 16v-1a5.500 5.500 0 0 1 11 0v1H13a2 2 0 0 0-4 0z" strokeWidth="1.400" /><path d="M3.500 13a8 8 0 0 1 15 0" strokeDasharray="1 1.500" /></Icon></button>
        <button aria-label="Mass properties"><Icon size={20}><path d="M3 19.500h16" strokeWidth="2.400" /><path d="M4 3.500h14M10 3v15M12 3v15M5 4l-2 9h5L5.500 4M16 4l-2 9h5l-2.500-9" strokeWidth="1.500" /><path d="M3 12h5v2H3zM14 12h5v2h-5z" fill={INK} /></Icon></button>
      </div>
    </main>
  )
}

const TABS = ['pivot (friction)', 'spur gear', 'belt drive', 'arm']

function TabBar() {
  const notch = '[clip-path:polygon(0_0,calc(100%-9px)_0,100%_50%,calc(100%-9px)_100%,0_100%,9px_50%)]'
  return (
    <footer className="flex h-[33px] shrink-0 items-start bg-[#d6d6d6] text-[15px] text-[#666]">
      <button aria-label="New tab" className="flex h-[33px] w-[37px] items-center justify-center">
        <Icon size={16} box={16} color="#666" w={3}><path d="M8 0v16M0 8h16" /></Icon>
      </button>
      <a href="#home" aria-label="Home" className="flex h-[30px] w-[49px] items-center bg-[#e9e9e9] pl-[10px] [clip-path:polygon(0_0,calc(100%-9px)_0,100%_50%,calc(100%-9px)_100%,0_100%)]">
        <Icon size={22}><path d="M0 12L11 1l4 4V1h4v8l3 3h-2v9h-6v-7H8v7H2v-9z" fill="#666" stroke="none" /></Icon>
      </a>
      <a href="#pivot" className={`-ml-[7px] flex h-[30px] w-[103px] items-center gap-2 bg-[#e9e9e9] pl-[17px] ${notch}`}>
        <Icon size={20} box={20} color="#555"><path d="M1 17V2h7l2 2h9v13z" fill="#fff" strokeWidth="1.500" /></Icon>pivot
      </a>
      <a href="#idea-assemblys" className={`-ml-[9px] flex h-[30px] w-[153px] items-center bg-white pl-6 whitespace-nowrap ${notch}`}>idea assemblys</a>
      <div role="tablist" className="ml-[2px] flex gap-[2px]">
        {TABS.map(t => (
          <button key={t} role="tab" aria-selected={t === 'arm'}
            className={`flex h-[30px] w-[225px] items-center rounded-b-[5px] border-b-[3px] pt-[2px] pl-4 ${
              t === 'arm' ? 'border-[#1b50b0] bg-white text-[#333]' : 'border-[#e9e9e9] bg-[#e9e9e9]'
            }`}>
            <DownIcon size={16} /><span className="mr-[5px] ml-[3px]"><AssemblyIcon size={20} /></span>{t}
          </button>
        ))}
      </div>
    </footer>
  )
}

export default function App() {
  return (
    <div className="flex h-screen overflow-hidden bg-white font-[Roboto,sans-serif] text-[#333]">
      <Rail />
      <div className="flex min-w-0 flex-1 flex-col">
        <Toolbar />
        <div className="flex min-h-0 flex-1">
          <InstancePanel />
          <Canvas />
        </div>
        <TabBar />
      </div>
    </div>
  )
}
